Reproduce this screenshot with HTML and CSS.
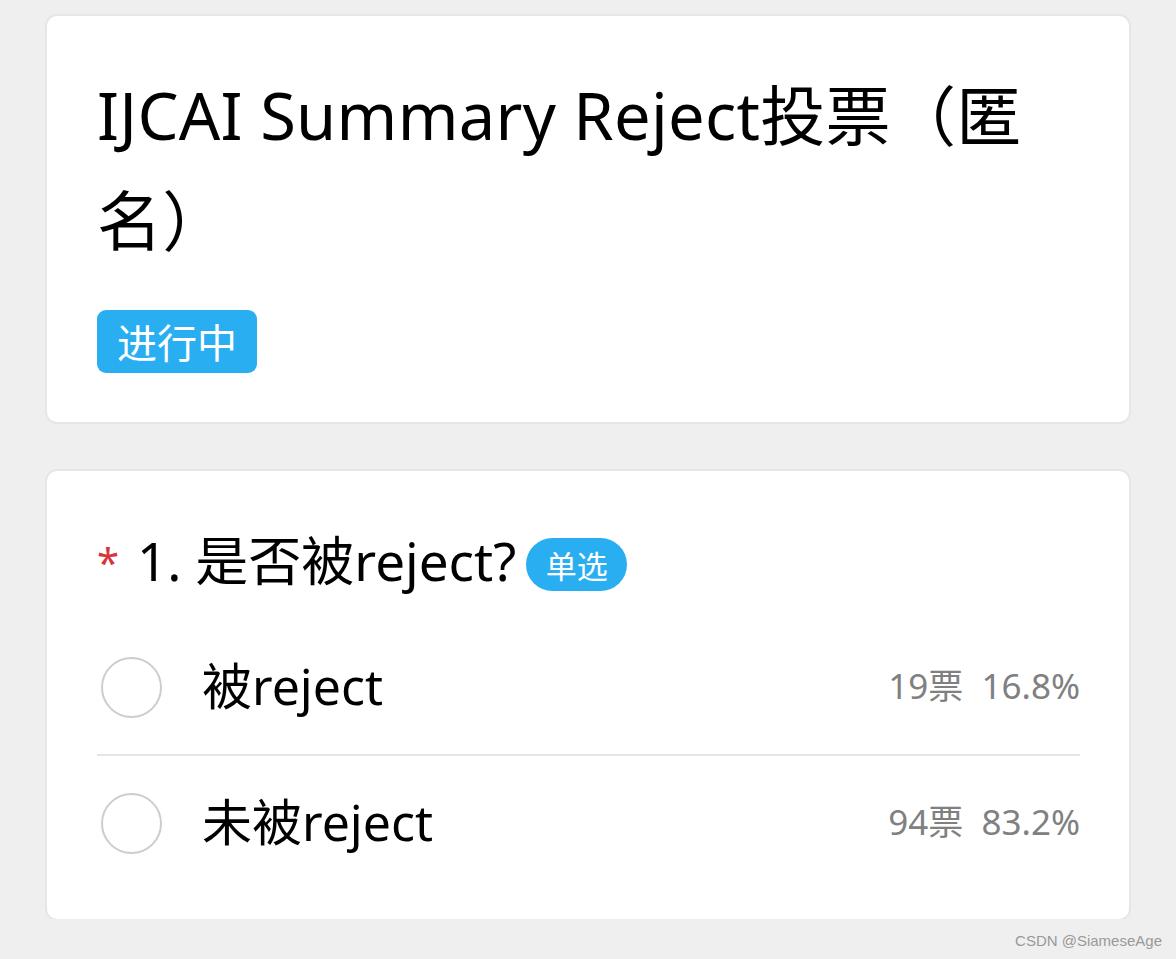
FILE: index.html
```html
<!DOCTYPE html>
<html lang="zh">
<head>
<meta charset="utf-8">
<link rel="stylesheet" href="styles.css">
</head>
<body>
<main class="page">
  <section class="card head-card">
    <h1 class="title">IJCAI Summary Reject投票（匿名）</h1>
    <span class="status">进行中</span>
  </section>
  <section class="card q-card">
    <div class="question">
      <span class="req">*</span>
      <span class="q-text">1. 是否被reject?</span>
      <span class="type">单选</span>
    </div>
    <div class="option">
      <span class="radio"></span>
      <span class="opt-label">被reject</span>
      <span class="opt-stat">19票&nbsp;&nbsp;16.8%</span>
    </div>
    <div class="divider"></div>
    <div class="option">
      <span class="radio"></span>
      <span class="opt-label">未被reject</span>
      <span class="opt-stat">94票&nbsp;&nbsp;83.2%</span>
    </div>
  </section>
</main>
<div class="mark">CSDN @SiameseAge</div>
</body>
</html>
```

FILE: styles.css
```css
html, body {
  margin: 0;
  padding: 0;
  background: #efefef;
  font-family: "Noto Sans", "Noto Sans CJK SC", sans-serif;
  color: #000;
}
.page {
  padding: 16px 47px 0 47px;
  display: flex;
  flex-direction: column;
  gap: 49px;
}
.card {
  background: #fff;
  border-radius: 10px;
  box-shadow: 0 0 0 2px #e6e6e6;
}
.head-card {
  height: 406px;
  box-sizing: border-box;
  padding: 47px 49px 0 50px;
}
.title {
  margin: 0;
  font-weight: 400;
  font-size: 65px;
  line-height: 105px;
  letter-spacing: 0.3px;
}
.status {
  display: inline-block;
  margin-top: 37px;
  width: 160px;
  height: 63px;
  border-radius: 9px;
  background: #2aaef2;
  color: #fff;
  font-size: 40px;
  line-height: 63px;
  text-align: center;
  font-family: "Noto Sans CJK SC", sans-serif;
}
.q-card {
  height: 448px;
  box-sizing: border-box;
  padding: 60px 49px 0 50px;
}
.question {
  display: flex;
  align-items: center;
  height: 60px;
  margin-bottom: 29px;
}
.req {
  color: #d8333a;
  font-size: 40px;
  width: 40px;
  line-height: 60px;
  margin-top: 2px;
}
.q-text {
  font-size: 53px;
  line-height: 60px;
}
.type {
  margin-left: 10px;
  height: 53px;
  width: 101px;
  border-radius: 27px;
  background: #2aaef2;
  color: #fff;
  font-family: "Noto Sans CJK SC", sans-serif;
  font-size: 31px;
  line-height: 53px;
  text-align: center;
  margin-top: 6px;
}
.option {
  display: flex;
  align-items: center;
  height: 134px;
}
.radio {
  width: 57px;
  height: 57px;
  border: 2px solid #cdcdcd;
  border-radius: 50%;
  margin-left: 4px;
  flex: none;
}
.opt-label {
  margin-left: 40px;
  font-size: 50px;
  flex: 1;
  margin-top: -8px;
}
.opt-stat {
  color: #808080;
  font-size: 35px;
  margin-top: -8px;
}
.divider {
  height: 2px;
  background: #e5e5e5;
}
.mark {
  position: absolute;
  right: 14px;
  top: 932px;
  font-family: "Liberation Sans", sans-serif;
  font-size: 15px;
  color: #999;
}
```
